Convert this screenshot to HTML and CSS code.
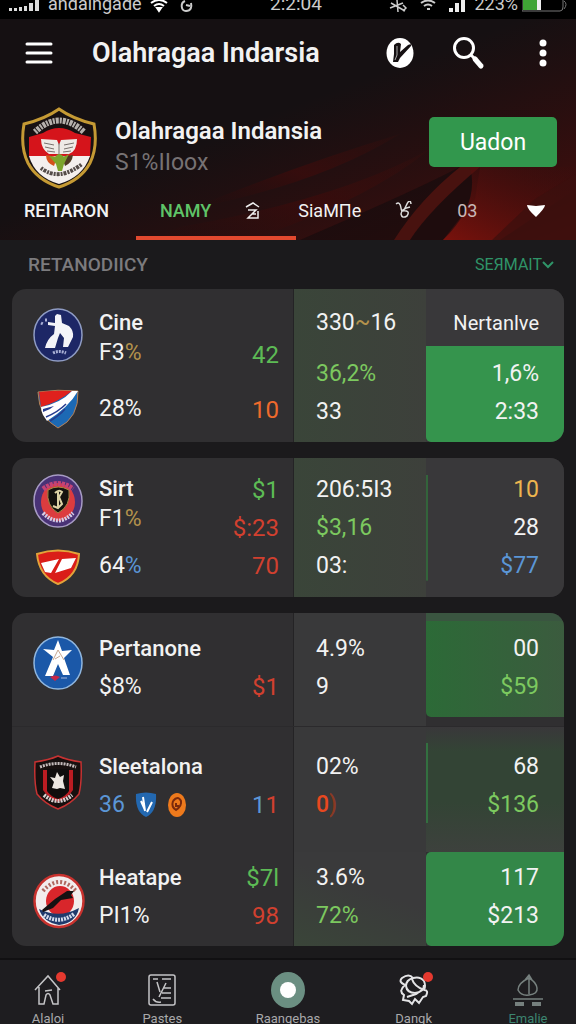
FILE: index.html
```html
<!DOCTYPE html>
<html lang="id">
<head>
    <meta charset="UTF-8">
    <meta name="viewport" content="width=device-width, initial-scale=1.0">
    <title>Olahragaa Indarsia</title>
    <link rel="stylesheet" href="styles.css">
</head>
<body>

    <div class="status-bar">
        <div class="status-group">
            <svg width="32" height="14" viewBox="0 0 32 14" fill="#ddd"><path d="M1 8h3v3H1zM6 8h3v3H6zM11 7h3v4h-3zM16 6h3v5h-3zM21 3h4v8h-4zM27 0h4v11h-4z"/></svg>
            <span>andaingade</span>
            <svg class="status-wifi" width="18" height="14" viewBox="0 0 18 14" fill="none" stroke="#fff" stroke-width="2"><path d="M1 3q8-6 16 0M4 6q5-4 10 0"/><path d="M7 8h4l-2 3z" fill="#fff"/></svg>
            <svg width="14" height="14" viewBox="0 0 14 14" fill="none" stroke="#ccc" stroke-width="2"><path d="M5 1C0 3 1 11 6 11s6-4 5-8M6 5l4 1"/></svg>
        </div>
        <span class="status-time">2:2:04</span>
        <div class="status-group">
            <svg width="20" height="14" viewBox="0 0 20 14" fill="none" stroke="#ccc" stroke-width="1.500"><path d="M2 8l13-5M9 0l1 12M3 3l14 8M15 5l3 3-3 3"/></svg>
            <svg class="status-wifi" width="16" height="14" viewBox="0 0 16 14" fill="none" stroke="#ccc" stroke-width="2"><path d="M1 3q7-5 14 0M4 6q4-3 8 0M7 9h3"/></svg>
            <svg class="status-signal" width="18" height="14" viewBox="0 0 18 14" fill="#eee"><path d="M1 8h4v4H1zM7 3h4v9H7zM13 0h4v12h-4z"/></svg>
            <span>223%</span>
            <svg width="46" height="14" viewBox="0 0 46 14"><path d="M0 0v11h38q3 0 3-4V0" fill="none" stroke="#777"/><path d="M1 0h14v10H1z" fill="#3fa535"/><path d="M15 0h4v10h-4z" fill="#eee"/><path d="M42 1q4 3 0 8" fill="none" stroke="#777"/></svg>
        </div>
    </div>

    <header class="hero">
        <svg class="hero-bg" viewBox="0 0 576 221" preserveAspectRatio="none">
            <defs>
                <linearGradient id="glow" x1="0" y1="0" x2="1" y2="1">
                    <stop offset="0.45" stop-color="#3c0c0c" stop-opacity="0"/>
                    <stop offset="1" stop-color="#4a0e0c"/>
                </linearGradient>
                <linearGradient id="streak" x1="1" y1="0" x2="0" y2="1">
                    <stop offset="0" stop-color="#3a0c0c" stop-opacity="0.2"/>
                    <stop offset="1" stop-color="#7a120c"/>
                </linearGradient>
                <linearGradient id="faint" x1="1" y1="0" x2="0" y2="1">
                    <stop offset="0" stop-color="#3a0e0c" stop-opacity="0.2"/>
                    <stop offset="0.5" stop-color="#3a0c0c" stop-opacity="0.8"/>
                    <stop offset="1" stop-color="#2a0c0c" stop-opacity="0"/>
                </linearGradient>
            </defs>
            <path d="M0 0h576v221H0z" fill="url(#glow)"/>
            <path d="M400 115Q300 145 190 190Q320 165 400 115z" fill="url(#faint)"/>
            <path d="M430 130Q340 180 180 208L150 221H250Q370 180 430 130z" fill="url(#faint)"/>
            <path d="M465 145Q430 165 300 221H395Q420 180 465 145z" fill="#130c0e" opacity="0.6"/>
            <path d="M460 148L480 148Q430 190 410 221H394Q420 180 460 148z" fill="#48120f"/>
            <path d="M480 148Q430 190 410 221H443L475 180z" fill="#1c0c0d" opacity="0.9"/>
            <path d="M470 148H576V170L500 221H443Q480 185 470 148z" fill="url(#streak)"/>
            <path d="M535 180L492 221H576V155z" fill="#3a100e" opacity="0.7"/>
        </svg>

        <div class="app-bar">
            <button class="icon-button" aria-label="Menu">
                <svg width="28" height="24" viewBox="0 0 28 24" stroke="#fff" stroke-width="3" stroke-linecap="round"><path d="M2 3h24M2 12h24M2 21h24"/></svg>
            </button>
            <h1>Olahragaa Indarsia</h1>
            <button class="icon-button" aria-label="Kompas">
                <svg width="28" height="32" viewBox="0 0 28 32"><ellipse cx="14" cy="16" rx="13.500" ry="15" fill="#fff"/><path d="M8 8q4-4 7-1l-1 8 8-7q4-2 3 1L14 21l-2 4H7l1-8z" fill="#151012"/><path d="M11 9v9l-2 5" stroke="#aaa" fill="none"/></svg>
            </button>
            <button class="icon-button search-button" aria-label="Cari">
                <svg width="34" height="34" viewBox="0 0 34 34" fill="none" stroke="#fff" stroke-linecap="round"><circle cx="12" cy="12" r="9.500" stroke-width="3"/><path d="M19 19l4 4" stroke-width="3"/><path d="M23 23l6 7" stroke-width="5"/></svg>
            </button>
            <button class="icon-button" aria-label="Lainnya">
                <svg width="10" height="28" viewBox="0 0 10 28" fill="#fff"><circle cx="5" cy="4" r="3.500"/><circle cx="5" cy="14" r="3.500"/><circle cx="5" cy="24" r="3.500"/></svg>
            </button>
        </div>

        <div class="club">
            <svg width="76" height="82" viewBox="0 0 76 82">
                <path d="M38 2Q52 12 73 17Q77 40 69 56Q60 73 38 80Q16 73 7 56Q-1 40 3 17Q24 12 38 2z" fill="#181112" stroke="#c59a34" stroke-width="3"/>
                <path d="M8 30L22 26Q38 16 54 26L70 30L69 50H8z" fill="#d5141b"/>
                <path d="M8 49H69Q62 70 38 77Q14 70 8 49z" fill="#f4efed"/>
                <path d="M14 25Q38 2 63 25" fill="none" stroke="#b5b0ac" stroke-width="6" stroke-dasharray="2 1 3 1"/>
                <path d="M20 32L36 33 38 38 40 33 56 32Q56 44 48 47H28Q20 42 20 32z" fill="#eeeae6"/>
                <path d="M23 36l10 2M24 40l9 2M26 44l8 1M53 36l-10 2M52 40l-9 2M50 44l-8 1M38 36v12" stroke="#77706c" fill="none"/>
                <path d="M25 48L36 50 33 59Q25 56 25 48z" fill="#d5501c"/>
                <path d="M52 48L41 50 44 59Q51 56 52 48z" fill="#513a22"/>
                <path d="M34 50Q38 44 43 50L48 47 43 57 41 64H37L35 57 28 49z" fill="#7da42c"/>
                <path d="M20 61Q38 75 61 57" fill="none" stroke="#544b48" stroke-width="4" stroke-dasharray="2 1 3 1"/>
            </svg>
            <div class="club-text">
                <h2>Olahragaa Indansia</h2>
                <p>S1%IIoox</p>
            </div>
            <button class="follow-button">Uadon</button>
        </div>

        <nav class="tabs">
            <a href="#reitaron">REITARON</a>
            <a href="#namy" class="active">NAMY
                <svg width="16" height="20" viewBox="0 0 16 20" fill="none" stroke="#eee" stroke-width="1.500"><path d="M1 6l7-4 6 4M3 9h8L3 17h10v-7M7 13h4"/></svg>
            </a>
            <a href="#siamne">SiaMПe
                <svg width="18" height="20" viewBox="0 0 18 20" fill="none" stroke="#ddd" stroke-width="1.500"><path d="M1 3q4-3 5 4t5-2 5-2M15 6q-9 2-9 7 1 5 6 2 4-6-5-5"/></svg>
            </a>
            <a href="#03" class="tab-dim">03</a>
            <button class="icon-button" aria-label="Tab lain">
                <svg width="20" height="14" viewBox="0 0 20 14" fill="#fff"><path d="M1 1l9 1 9-1q0 3-9 12Q1 5 1 1z"/></svg>
            </button>
        </nav>
    </header>

    <main>
        <div class="section-head">
            <h3>RETANODIICY</h3>
            <a href="#semua">SEЯMAIT
                <svg width="12" height="8" viewBox="0 0 12 8" fill="none" stroke="#2f9468" stroke-width="2"><path d="M1 1l5 5 5-5"/></svg>
            </a>
        </div>

        <section class="card card-first">
            <div class="teams">
                <div class="team">
                    <svg width="50" height="54" viewBox="0 0 50 54"><ellipse cx="25" cy="27" rx="24" ry="26" fill="#1d2766" stroke="#8f9cc4" stroke-width="1.500"/><path d="M22 8l2-2 4 1 1 8 7 3q5 5 4 11l-5 10h-5l1-9-4-5-2 5-3 10H12q2-9 9-14l1-8-7-1v-3l7 1z" fill="#f4f4f8"/><path d="M8 15l2 1M12 12l2 0M20 45q6-3 13 0" stroke="#aab0d5" stroke-width="3" stroke-dasharray="2 1" fill="none"/></svg>
                    <div class="team-text">
                        <span class="name">Cine</span>
                        <span>F3<span class="gold">%</span></span>
                    </div>
                </div>
                <div class="team team-small">
                    <svg width="50" height="40" viewBox="0 0 50 40"><path d="M5 3Q25 0 45 2Q46 29 25 39Q6 29 5 3z" fill="#1c69b4" stroke="#b98052"/><path d="M6 3Q25 1 39 2Q25 13 8 18z" fill="#df211d"/><path d="M39 2h6Q36 18 14 32L10 26Q8 22 8 18Q28 14 39 2z" fill="#fff"/><path d="M10 20l11-3-4 3-7 3z" fill="#263c8f"/><path d="M13 28q12-5 20-13M17 32q10-6 15-12" stroke="#263c8f" stroke-width="1.500" fill="none"/></svg>
                    <span>28%</span>
                </div>
            </div>
            <div class="values">
                <span class="green">42</span>
                <span class="orange push">10</span>
            </div>
            <div class="odds tinted">
                <span>330<span class="gold">~</span>16</span>
                <span class="lime spaced">36,2%</span>
                <span>33</span>
            </div>
            <div class="result">
                <span class="result-head">Nertanlve</span>
                <div class="result-box">
                    <span>1,6%</span>
                    <span>2:33</span>
                </div>
            </div>
        </section>

        <section class="card card-second">
            <div class="teams">
                <div class="team">
                    <svg width="50" height="54" viewBox="0 0 50 54"><ellipse cx="25" cy="27" rx="24" ry="26" fill="#493276" stroke="#a79bc4" stroke-width="1.500"/><ellipse cx="25" cy="28" rx="17" ry="19" fill="#dc3c3f"/><path d="M10 15Q25 4 40 15" fill="none" stroke="#c44377" stroke-width="5" stroke-dasharray="3 1"/><path d="M10 39Q25 54 40 39" fill="none" stroke="#d7cde6" stroke-width="4" stroke-dasharray="2 1"/><path d="M15 16q10-6 21 0 2 16-11 23-12-7-10-23z" fill="#15120f" stroke="#a58b45"/><path d="M22 19q4-4 7-1l-3 5 3 7-4 4-5-2M25 18v16" fill="none" stroke="#ddd2a5" stroke-width="2"/></svg>
                    <div class="team-text">
                        <span class="name">Sirt</span>
                        <span>F1<span class="gold">%</span></span>
                    </div>
                </div>
                <div class="team team-small">
                    <svg width="50" height="40" viewBox="0 0 50 40"><path d="M4 8Q25 1 46 8Q45 30 25 38Q6 30 4 8z" fill="#da1d18" stroke="#e2a33a" stroke-width="2"/><path d="M8 17L26 13 18 27 12 26zM29 13L43 12 38 22 22 27z" fill="#fff"/></svg>
                    <span>64<span class="blue">%</span></span>
                </div>
            </div>
            <div class="values">
                <span class="green">$1</span>
                <span class="red">$:23</span>
                <span class="red">70</span>
            </div>
            <div class="odds tinted">
                <span>206:5I3</span>
                <span class="lime">$3,16</span>
                <span>03:</span>
            </div>
            <div class="result lined">
                <span class="amber">10</span>
                <span>28</span>
                <span class="blue">$77</span>
            </div>
        </section>

        <section class="card card-list">
            <div class="row row-one">
                <div class="team">
                    <svg width="50" height="54" viewBox="0 0 50 54"><ellipse cx="25" cy="27" rx="24" ry="26" fill="#1b58a8" stroke="#8fb6df" stroke-width="1.500"/><path d="M25 4l4 11 10-1-8 8 6 17h-7l-5-11-5 12h-8l8-19-10-8 11 1z" fill="#fff"/><path d="M25 14l-5 10M25 14l6 10M22 23l5-3" stroke="#c8a890" fill="none"/><path d="M17 41q5-3 10 0l-5 4z" fill="#c62748"/><path d="M28 42h6" stroke="#a4b4dc"/></svg>
                    <div class="team-text">
                        <span class="name">Pertanone</span>
                        <span>$8%</span>
                    </div>
                </div>
                <div class="values">
                    <span class="red">$1</span>
                </div>
                <div class="odds">
                    <span>4.9%</span>
                    <span>9</span>
                </div>
                <div class="result">
                    <span>00</span>
                    <span class="lime">$59</span>
                </div>
            </div>

            <div class="row row-two">
                <div class="team">
                    <svg width="50" height="56" viewBox="0 0 50 56"><path d="M25 2Q34 6 48 8Q49 28 46 40Q38 50 25 55Q12 50 4 40Q1 28 2 8Q16 6 25 2z" fill="#17100f" stroke="#c63232" stroke-width="1.500"/><path d="M10 16h30v20q-5 8-15 12-10-4-15-12z" fill="#bb1c22"/><path d="M14 15h22v22q-3 5-11 8-8-3-11-8z" fill="#100d0d"/><path d="M7 13Q25 6 43 13" fill="none" stroke="#c5bcbc" stroke-width="3" stroke-dasharray="2 1"/><path d="M11 41Q25 53 39 41" fill="none" stroke="#d8d0d0" stroke-width="4" stroke-dasharray="2 1"/><path d="M24 18l3 5 4-2-1 6 2 8-5-1-3 1-5-1 2-6-4-5 5 1z" fill="#ece5e0"/></svg>
                    <div class="team-text">
                        <span class="name">Sleetalona</span>
                        <span class="badges">
                            <span class="blue">36</span>
                            <svg width="22" height="26" viewBox="0 0 22 26"><path d="M1 2q10-3 20 0 1 18-10 23Q0 20 1 2z" fill="#2368b0"/><path d="M8 5l2 14M12 20l5-10M10 18L6 9" fill="none" stroke="#fff" stroke-width="2"/></svg>
                            <svg width="20" height="26" viewBox="0 0 20 26"><ellipse cx="10" cy="13" rx="9" ry="12" fill="#ee7a1c"/><path d="M6 9q5-6 8 0 1 5-5 9-5-3-3-9M9 11v3h3" fill="none" stroke="#7a2a0c" stroke-width="2"/></svg>
                        </span>
                    </div>
                </div>
                <div class="values">
                    <span><span class="blue">1</span><span class="red">1</span></span>
                </div>
                <div class="odds">
                    <span>02%</span>
                    <span class="vermilion">0<span class="ghost">)</span></span>
                </div>
                <div class="result">
                    <span>68</span>
                    <span class="lime">$136</span>
                </div>
            </div>

            <div class="row row-three">
                <div class="team">
                    <svg width="52" height="56" viewBox="0 0 52 56"><ellipse cx="26" cy="28" rx="24.500" ry="26" fill="#f2ecec" stroke="#c8322e" stroke-width="2.500"/><path d="M10 18Q26 0 43 18" fill="none" stroke="#b0685f" stroke-width="4" stroke-dasharray="2 2"/><ellipse cx="27" cy="28" rx="14" ry="15" fill="#d8262b"/><path d="M6 36q20 10 40-1-3 15-20 17-16-3-20-16z" fill="#203a6c"/><path d="M11 42Q26 52 41 41" fill="none" stroke="#d5dcec" stroke-width="4" stroke-dasharray="2 1"/><path d="M9 37l13-11 12-8h7l-3 4 2 3-12 2-8 8-10 4z" fill="#161112"/></svg>
                    <div class="team-text">
                        <span class="name">Heatape</span>
                        <span>PI1%</span>
                    </div>
                </div>
                <div class="values">
                    <span class="green">$7l</span>
                    <span class="red">98</span>
                </div>
                <div class="odds">
                    <span>3.6%</span>
                    <span class="lime">72%</span>
                </div>
                <div class="result">
                    <span>117</span>
                    <span>$213</span>
                </div>
            </div>
        </section>
    </main>

    <nav class="bottom-nav">
        <a href="#home">
            <span class="nav-icon">
                <svg width="28" height="34" viewBox="0 0 28 34" fill="none" stroke="#c4c4c6" stroke-width="1.500"><path d="M1 17L14 3l12 14M5 14v17h5l2-9q2-3 4 0l3 9h5V15M11 18l7-1"/></svg>
                <span class="dot"></span>
            </span>
            Alaloi
        </a>
        <a href="#berita">
            <span class="nav-icon">
                <svg width="28" height="34" viewBox="0 0 28 34" fill="none" stroke="#c4c4c6" stroke-width="1.500"><rect x="1" y="2" width="26" height="30" rx="2"/><path d="M5 6h5M14 6h9M9 9l3 10M18 10l-7 14M16 15h7M14 20h9M13 25h10M5 26q3 4 8 3"/></svg>
            </span>
            Pastes
        </a>
        <a href="#pertandingan">
            <span class="nav-icon">
                <svg width="34" height="36" viewBox="0 0 34 36"><ellipse cx="17" cy="18" rx="17" ry="18" fill="#6b8f82"/><circle cx="17" cy="18" r="8" fill="#fff"/></svg>
            </span>
            Raangebas
        </a>
        <a href="#klub">
            <span class="nav-icon">
                <svg width="30" height="34" viewBox="0 0 30 34" fill="none" stroke="#e4e4e6" stroke-width="2"><path d="M6 12Q-1 9 3 5q7-5 11 0 7-2 11 3 2 5 0 9M6 12q-7 6-1 10l-1 5 6 1 3 3 3-5 4 4 4-6 3-1q3-6-2-6M7 13q0-6 7-8M7 13q1 7 9 7 9-1 9-8M13 6q2 7 12 11M8 24l9-3 6-4"/></svg>
                <span class="dot"></span>
            </span>
            Dangk
        </a>
        <a href="#statistik" class="muted">
            <span class="nav-icon">
                <svg width="30" height="34" viewBox="0 0 30 34" fill="none" stroke="#76807e" stroke-width="1.500"><path d="M16 2v19M16 5Q5 10 5 17q3 6 11 5 9-1 8-7-1-6-8-10M12 7l4-5 3 5M0 26h30"/><path d="M2 31h9M19 31h9" stroke-width="4"/></svg>
            </span>
            Emalie
        </a>
    </nav>

</body>
</html>
```
FILE: styles.css
```css
* {
    box-sizing: border-box;
}
body {
    margin: 0;
    height: 100vh;
    display: flex;
    flex-direction: column;
    overflow: hidden;
    font-family: Roboto, "Noto Sans", sans-serif;
    font-size: 23px;
    background-color: #1b1a1c;
    color: #f2f2f2;
}
h1, h2, h3, p {
    margin: 0;
}
a {
    color: inherit;
    text-decoration: none;
}
svg {
    display: block;
    flex: none;
}
button {
    font-family: inherit;
    border: none;
    cursor: pointer;
}

/* Status bar */
.status-bar {
    display: flex;
    flex: none;
    justify-content: space-between;
    align-items: flex-end;
    height: 19px;
    padding: 0 8px 5px;
    overflow: hidden;
    background-color: #000;
    color: #ccc;
    font-size: 18px;
    line-height: 20px;
}
.status-group {
    display: flex;
    align-items: flex-end;
    gap: 8px;
}
.status-group span {
    margin-right: -4px;
}
.status-wifi {
    margin: 0 4px;
}
.status-time {
    margin-left: 10px;
    font-size: 19px;
}

/* Header */
.hero {
    position: relative;
    flex: none;
    background-color: #151012;
}
.hero-bg {
    position: absolute;
    top: 0;
    left: 0;
    width: 100%;
    height: 100%;
}
.app-bar,
.club,
.tabs {
    position: relative;
    display: flex;
    align-items: center;
}
.app-bar {
    height: 68px;
    padding: 0 28px 0 25px;
}
.app-bar h1 {
    flex: 1;
    margin-left: 39px;
    font-size: 27px;
    font-weight: 600;
    white-space: nowrap;
}
.icon-button {
    padding: 0;
    background: none;
}
.search-button {
    margin: 0 52px 0 38px;
}
.club {
    padding: 20px 19px 0 21px;
    align-items: flex-start;
}
.club-text {
    flex: 1;
    margin-left: 18px;
    padding-top: 8px;
}
.club-text h2 {
    font-size: 24px;
    font-weight: 600;
    line-height: 32px;
    white-space: nowrap;
}
.club-text p {
    color: #777274;
    font-size: 23px;
    line-height: 32px;
}
.follow-button {
    width: 128px;
    height: 50px;
    margin-top: 10px;
    border-radius: 5px;
    background-color: #32974d;
    color: #fff;
    font-size: 23px;
}
.tabs {
    height: 51px;
    font-size: 18px;
    font-weight: 500;
    line-height: 42px;
}
.tabs a {
    display: flex;
    align-items: center;
    height: 51px;
    gap: 34px;
    padding: 0 24px 8px;
}
.tabs .active {
    margin-left: 3px;
    padding-right: 35px;
    border-bottom: 4px solid #e2492f;
    padding-bottom: 4px;
    color: #5fc468;
}
.tabs .active + a {
    padding-left: 2px;
    font-weight: 400;
}
.tabs .tab-dim {
    padding-left: 20px;
    color: #c9b9b8;
    font-weight: 400;
}
.tabs .icon-button {
    margin: 0 30px 8px auto;
}

/* Match cards */
main {
    flex: 1 0 auto;
    padding: 0 12px 12px;
}
.section-head {
    display: flex;
    justify-content: space-between;
    align-items: center;
    height: 49px;
    padding: 0 10px 0 16px;
}
.section-head h3 {
    color: #7c7b7e;
    font-size: 19px;
    font-weight: 500;
}
.section-head a {
    display: flex;
    align-items: center;
    color: #2f9468;
    font-size: 16px;
}
.card {
    margin-bottom: 16px;
    border-radius: 14px;
    overflow: hidden;
    background-color: #302f31;
    line-height: 38px;
}
.card-first,
.card-second,
.row {
    display: grid;
    grid-template-columns: 211fr 70fr 133fr 138fr;
}
.card-list {
    margin-bottom: 0;
}
.team {
    display: flex;
    align-items: flex-start;
    gap: 16px;
    padding-left: 21px;
    white-space: nowrap;
}
.team-text {
    display: flex;
    flex-direction: column;
}
.teams .team-text {
    line-height: 30px;
}
.name {
    font-size: 22px;
    font-weight: 500;
}
.team-small {
    align-items: center;
    height: 42px;
}
.values,
.odds,
.result {
    display: flex;
    flex-direction: column;
    white-space: nowrap;
}
.values {
    align-items: flex-end;
    padding-right: 14px;
    font-size: 24px;
}
.odds {
    padding-left: 22px;
    border-left: 1px solid #242325;
    background-color: #3a3a3b;
}
.odds.tinted {
    background: linear-gradient(90deg, #3a4539, #3d403b);
}
.result {
    align-items: flex-end;
    padding-right: 25px;
    background-color: #39383a;
}

.card-first .teams {
    padding: 19px 0 12px;
}
.card-first .team-small {
    margin-top: 20px;
}
.card-first .values {
    padding-top: 47px;
}
.push {
    margin-top: 17px;
}
.card-first .odds {
    padding-top: 15px;
}
.spaced {
    margin-top: 13px;
}
.card-first .result {
    align-items: stretch;
    padding: 0;
    text-align: right;
}
.result-head {
    height: 57px;
    padding: 15px 25px 0 0;
    font-size: 20px;
}
.result-box {
    display: flex;
    flex: 1;
    flex-direction: column;
    padding: 9px 25px 0 0;
    border-radius: 0 0 0 5px;
    background-color: #35944d;
}

.card-second .teams {
    padding: 16px 0 10px;
}
.card-second .team-small {
    margin-top: 11px;
}
.card-second .values,
.card-second .odds,
.card-second .result {
    padding-top: 13px;
}
.lined {
    background-image: linear-gradient(#33643b, #33643b);
    background-repeat: no-repeat;
    background-position: 0 50%;
    background-size: 2px 76%;
}

.row-one {
    height: 114px;
    border-bottom: 1px solid #2b2a2c;
}
.row-two {
    height: 125px;
}
.row-three {
    height: 94px;
}
.row-one > div {
    padding-top: 17px;
}
.row-two > div {
    padding-top: 21px;
}
.row-three > div {
    padding-top: 7px;
}
.row .team svg {
    margin-top: 6px;
}
.row-three .team svg {
    margin-top: 14px;
    margin-right: -2px;
}
.row-one .values,
.row-two .values {
    justify-content: flex-end;
    padding-bottom: 20px;
}
.row-two .values {
    padding-bottom: 28px;
}
.row .badges {
    display: flex;
    align-items: center;
    gap: 10px;
}
.row .badges svg {
    margin: 0;
}
.row-one .result {
    margin-bottom: 9px;
    border-top: 8px solid #3a5540;
    padding-top: 9px;
    border-radius: 0 0 0 5px;
    background: linear-gradient(90deg, #2c6a37, #3b5b3e);
}
.row-one .odds,
.row-two .odds {
    background-color: #39393a;
}
.row-two .result {
    background:
        linear-gradient(#337040, #337040) 0 16px / 2px 80px no-repeat,
        linear-gradient(#39383a, #334435 20%, #334435 60%, #3d413d);
}
.row-three .result {
    border-radius: 5px 0 0 5px;
    background-color: #338748;
}
.row-three .odds {
    background: linear-gradient(20deg, #3a4539, #3a3a3b 60%);
}

/* Text colours */
.green {
    color: #5dbb55;
}
.lime {
    color: #7cc95f;
}
.orange {
    color: #ee6a2c;
}
.red {
    color: #d1402f;
}
.vermilion {
    color: #e8481f;
    font-weight: 500;
}
.ghost {
    color: #8a3a22;
}
.gold {
    color: #b3924c;
}
.amber {
    color: #edb54f;
}
.blue {
    color: #5b96d6;
}

/* Bottom navigation */
.bottom-nav {
    display: flex;
    flex: none;
    justify-content: space-between;
    padding: 12px 27px 8px;
    border-top: 2px solid #111012;
    background-color: #1e1d20;
    color: #a9a9ab;
    font-size: 13px;
    line-height: 16px;
}
.bottom-nav a {
    display: flex;
    flex-direction: column;
    align-items: center;
    gap: 3px;
    min-width: 42px;
}
.bottom-nav .muted {
    color: #3c8570;
}
.nav-icon {
    position: relative;
    display: flex;
    align-items: center;
    height: 36px;
}
.dot {
    position: absolute;
    top: 0;
    right: -4px;
    width: 10px;
    height: 10px;
    border-radius: 50%;
    background-color: #e5392f;
}
```
